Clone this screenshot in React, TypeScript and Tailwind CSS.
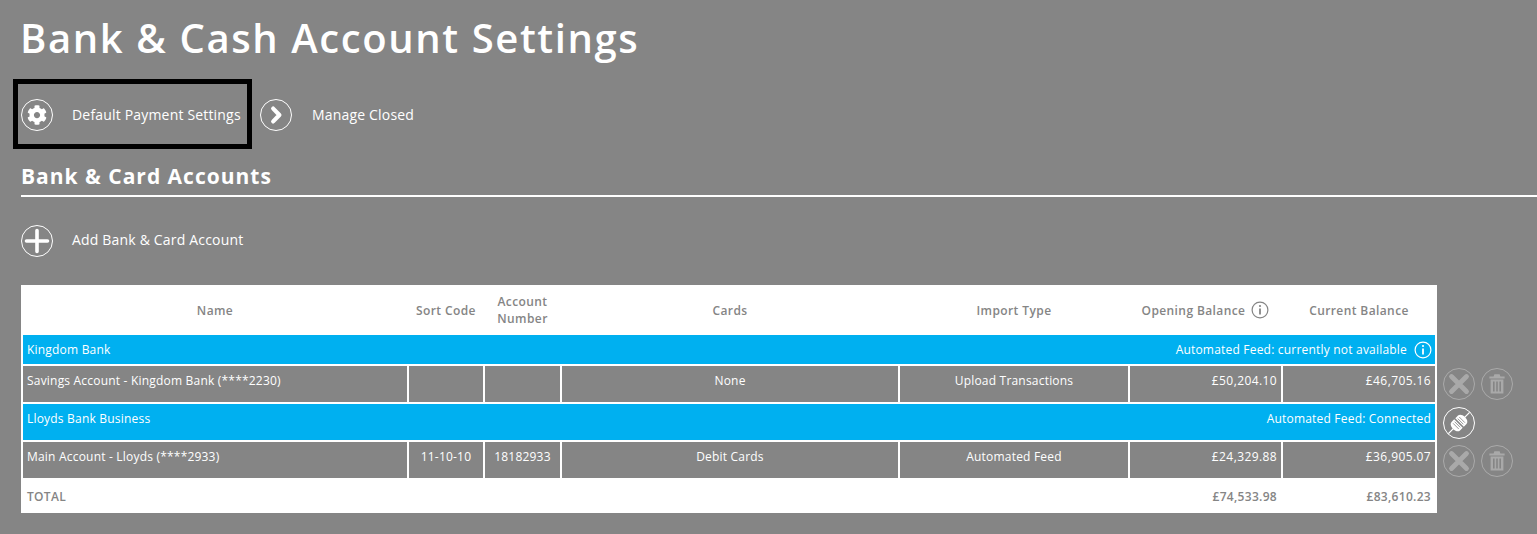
import React from "react";
import { FaCog } from "react-icons/fa";

const InfoIcon = ({ size = 18 }: { size?: number }) => (
  <svg width={size} height={size} viewBox="0 0 18 18" fill="none" stroke="currentColor" className="inline-block shrink-0">
    <circle cx="9" cy="9" r="7.9" strokeWidth="1.2" />
    <path d="M9 7.6V13.4" strokeWidth="1.8" />
    <circle cx="9" cy="5" r="1.1" fill="currentColor" stroke="none" />
  </svg>
);

const ChevronIcon = () => (
  <svg width="30" height="30" viewBox="0 0 30 30" fill="none" stroke="currentColor">
    <path d="M12.2 8.6L18.4 15L12.2 21.4" strokeWidth="4.2" strokeLinecap="round" strokeLinejoin="round" />
  </svg>
);

const PlusIcon = () => (
  <svg width="30" height="30" viewBox="0 0 30 30" fill="none" stroke="currentColor">
    <path d="M15 4.5V25.5M4.5 15H25.5" strokeWidth="3.6" strokeLinecap="round" />
  </svg>
);

const CrossIcon = () => (
  <svg width="30" height="30" viewBox="0 0 30 30" fill="none" stroke="currentColor">
    <path d="M7.5 7.5L22.5 22.5M22.5 7.5L7.5 22.5" strokeWidth="4.8" strokeLinecap="round" />
  </svg>
);

const TrashIcon = () => (
  <svg width="30" height="30" viewBox="0 0 30 30" fill="currentColor">
    <path d="M12.4 5.2H17.6L18.4 7.4H22.6V9.6H7.4V7.4H11.6Z" />
    <path fillRule="evenodd" d="M8.6 10.6H21.4V24.6H8.6ZM11 12.6V22.6H12.6V12.6ZM14.2 12.6V22.6H15.8V12.6ZM17.4 12.6V22.6H19V12.6Z" />
  </svg>
);

const PlugIcon = () => (
  <svg width="30" height="30" viewBox="0 0 30 30" fill="none" stroke="currentColor">
    <g transform="rotate(45 15 15)">
      <path d="M15 0V7M15 23V30" strokeWidth="1.3" />
      <path d="M9 14.2V10.4C9 8.2 11.4 6.6 15 6.6C18.6 6.6 21 8.2 21 10.4V14.2Z" fill="currentColor" stroke="none" />
      <path d="M9 15.8V19.6C9 21.8 11.4 23.4 15 23.4C18.6 23.4 21 21.8 21 19.6V15.8Z" fill="currentColor" stroke="none" />
      <path d="M11 10.6H19M11 12.8H19M11 17.2H19M11 19.4H19" stroke="#858585" strokeWidth="0.8" />
    </g>
  </svg>
);

const Round = ({ children, faded }: { children: React.ReactNode; faded?: boolean }) => (
  <div className={`flex h-8 w-8 items-center justify-center rounded-full border-[1.5px] ${faded ? "border-white/30 text-white/30" : "border-white text-white"}`}>
    {children}
  </div>
);

const RowActions = ({ className }: { className: string }) => (
  <div className={`flex items-center gap-[6px] ${className}`}>
    <Round faded>
      <CrossIcon />
    </Round>
    <Round faded>
      <TrashIcon />
    </Round>
  </div>
);

const LinkButton = ({ icon, label, labelClass }: { icon: React.ReactNode; label: string; labelClass: string }) => (
  <div className="flex h-8 items-center">
    <Round>{icon}</Round>
    <span className={`text-sm tracking-[0.18px] text-white ${labelClass}`}>{label}</span>
  </div>
);

const cell = "border-2 border-white pl-[4px] pr-[4px] align-top pt-[7px] text-[12px] leading-[16px] tracking-[0.2px] text-white";
const money = "text-right !tracking-[0.4px]";
const head = "pt-[2px] font-semibold text-[12px] leading-[17px] text-[#858585] tracking-[0.4px]";

export default function App() {
  return (
    <div className="h-[534px] overflow-hidden bg-[#858585] pl-[21px] font-['Open_Sans',sans-serif] text-white">
      <h1 className="-ml-px pt-[11px] text-[40px] font-semibold leading-[54px] tracking-[1.6px]">Bank &amp; Cash Account Settings</h1>

      <div className="mt-[14px] flex items-center">
        <div className="-ml-[8px] flex h-[70px] w-[239px] items-center border-[5px] border-black pl-[3px] pt-[2px]">
          <LinkButton icon={<FaCog size={20} />} label="Default Payment Settings" labelClass="ml-[19px]" />
        </div>
        <div className="ml-[8px] pt-[2px]">
          <LinkButton icon={<ChevronIcon />} label="Manage Closed" labelClass="ml-[20px]" />
        </div>
      </div>

      <h2 className="mt-[12px] text-[21px] font-bold leading-[30px] tracking-[1px]">Bank &amp; Card Accounts</h2>
      <div className="mt-[4px] h-[2px] bg-white" />

      <div className="mt-[28px]">
        <LinkButton icon={<PlusIcon />} label="Add Bank & Card Account" labelClass="ml-[19px] -mt-[2px]" />
      </div>

      <div className="mt-[28px] flex">
        <table className="w-[1416px] table-fixed border-collapse bg-white">
          <colgroup>
            <col className="w-[386px]" />
            <col className="w-[76px]" />
            <col className="w-[77px]" />
            <col className="w-[338px]" />
            <col className="w-[230px]" />
            <col className="w-[153px]" />
            <col className="w-[154px]" />
          </colgroup>
          <thead>
            <tr className="h-[49px] text-center">
              <th className={head}>Name</th>
              <th className={head}>Sort Code</th>
              <th className={head}>Account Number</th>
              <th className={head}>Cards</th>
              <th className={head}>Import Type</th>
              <th className={head}>
                <span className="inline-flex items-center gap-[6px]">
                  Opening Balance <InfoIcon />
                </span>
              </th>
              <th className={head}>Current Balance</th>
            </tr>
          </thead>
          <tbody>
            <tr className="h-[31px] bg-[#00b0f0]">
              <td colSpan={7} className={`${cell} !pt-[6px] !pr-[3px]`}>
                <div className="flex items-center justify-between">
                  <span>Kingdom Bank</span>
                  <span className="inline-flex items-center gap-[7px]">
                    Automated Feed: currently not available <InfoIcon />
                  </span>
                </div>
              </td>
            </tr>
            <tr className="h-[38px] bg-[#858585]">
              <td className={cell}>Savings Account - Kingdom Bank (****2230)</td>
              <td className={cell}></td>
              <td className={cell}></td>
              <td className={`${cell} text-center`}>None</td>
              <td className={`${cell} text-center`}>Upload Transactions</td>
              <td className={`${cell} ${money}`}>£50,204.10</td>
              <td className={`${cell} ${money}`}>£46,705.16</td>
            </tr>
            <tr className="h-[38px] bg-[#00b0f0]">
              <td colSpan={7} className={cell}>
                <div className="flex items-center justify-between">
                  <span>Lloyds Bank Business</span>
                  <span>Automated Feed: Connected</span>
                </div>
              </td>
            </tr>
            <tr className="h-[38px] bg-[#858585]">
              <td className={cell}>Main Account - Lloyds (****2933)</td>
              <td className={`${cell} text-center`}>11-10-10</td>
              <td className={`${cell} text-center`}>18182933</td>
              <td className={`${cell} text-center`}>Debit Cards</td>
              <td className={`${cell} text-center`}>Automated Feed</td>
              <td className={`${cell} ${money}`}>£24,329.88</td>
              <td className={`${cell} ${money}`}>£36,905.07</td>
            </tr>
            <tr className="h-[34px] text-[12px] font-semibold tracking-[0.3px] text-[#858585]">
              <td colSpan={5} className="pl-[5px] pr-[6px]">TOTAL</td>
              <td className="pl-[6px] pr-[5px] text-right">£74,533.98</td>
              <td className="pl-[6px] pr-[5px] text-right">£83,610.23</td>
            </tr>
          </tbody>
        </table>
        <div className="ml-[6px] flex flex-col pt-[79px]">
          <RowActions className="h-[40px]" />
          <div className="flex h-[38px] items-center">
            <Round>
              <PlugIcon />
            </Round>
          </div>
          <RowActions className="h-[38px]" />
        </div>
      </div>
    </div>
  );
}
